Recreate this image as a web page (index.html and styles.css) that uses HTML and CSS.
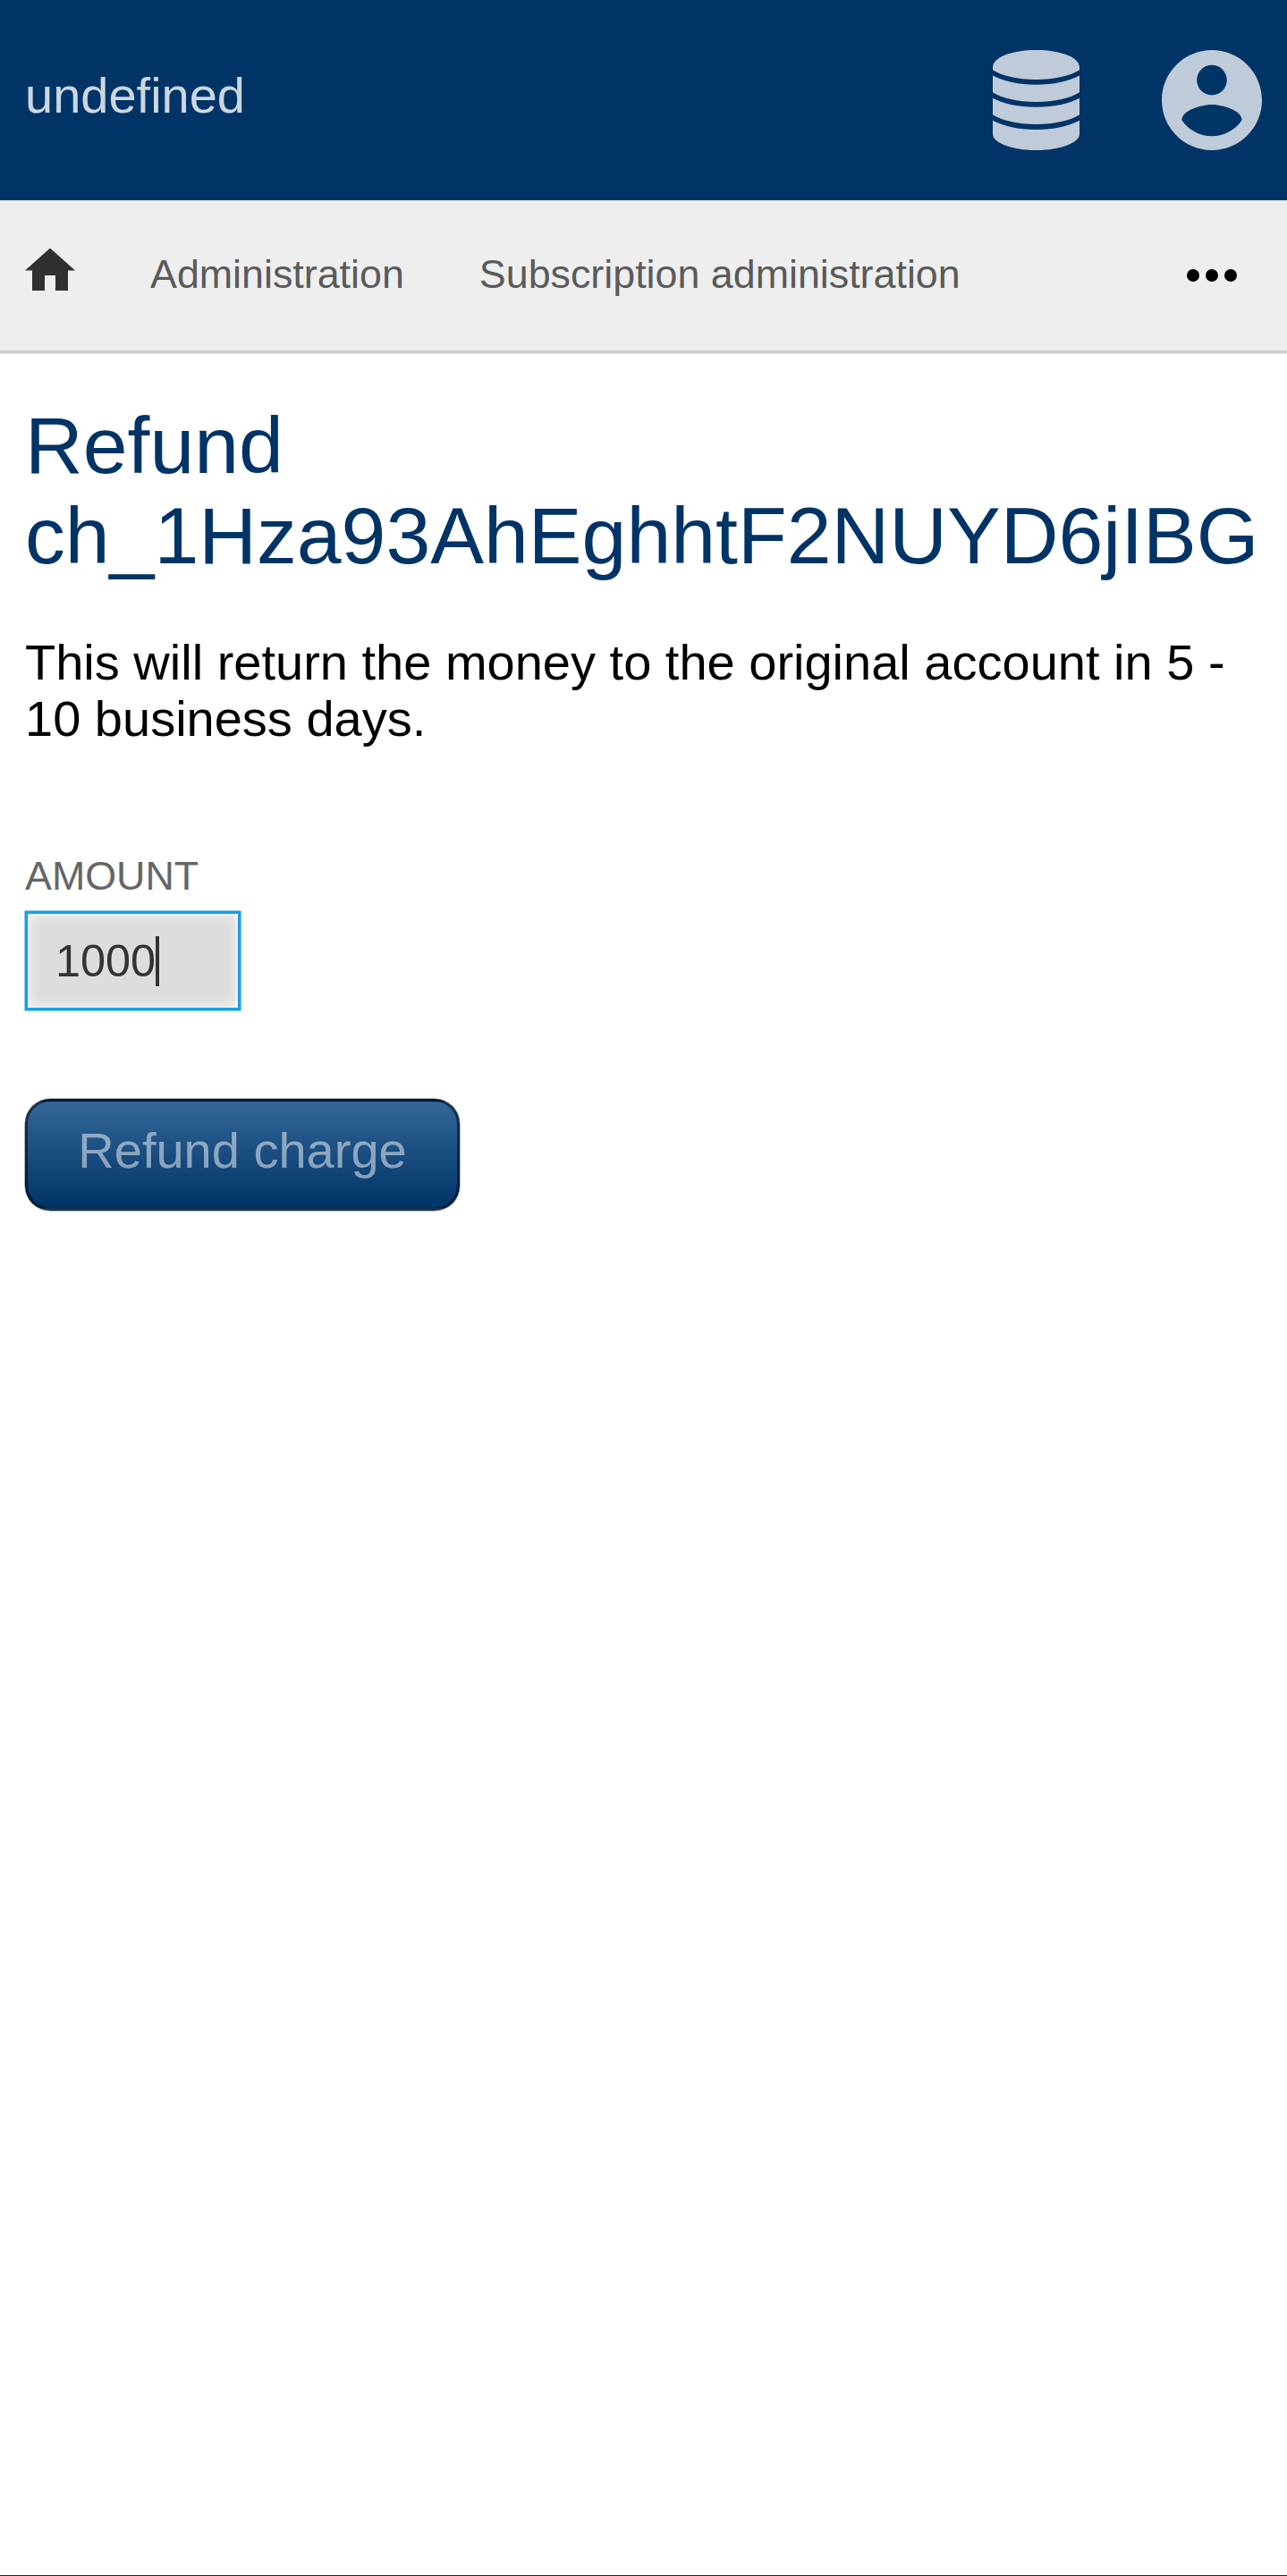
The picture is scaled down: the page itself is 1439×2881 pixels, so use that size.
FILE: index.html
```html
<!DOCTYPE html>
<html lang="en">
<head>
<meta charset="utf-8">
<title>Refund charge</title>
<link rel="stylesheet" href="styles.css">
</head>
<body>
<header class="header">
  <span class="brand">undefined</span>
  <div class="header-icons">
    <svg class="icon-database" viewBox="0 0 97 112" aria-hidden="true">
      <path d="M0 19.500C0 8 21 0 48.500 0S97 8 97 19.500V22.200C87 28.700 69 33 48.500 33S10 28.700 0 22.200z"/>
      <path d="M0 28.500C12 35 29 38.700 48.500 38.700S85 35 97 28.500V47.300C87 53.800 69 58 48.500 58S10 53.800 0 47.300z"/>
      <path d="M0 53.700C12 60.200 29 63.700 48.500 63.700S85 60.200 97 53.700V72.300C87 78.800 69 83 48.500 83S10 78.800 0 72.300z"/>
      <path d="M0 78.700C12 85.200 29 89 48.500 89S85 85.200 97 78.700V94C97 103.500 76 112 48.500 112S0 103.500 0 94z"/>
    </svg>
    <svg class="icon-account" viewBox="2 2 20 20" aria-hidden="true">
      <path d="M12 2C6.480 2 2 6.480 2 12s4.480 10 10 10 10-4.480 10-10S17.520 2 12 2zm0 3c1.660 0 3 1.340 3 3s-1.340 3-3 3-3-1.340-3-3 1.340-3 3-3zm0 14.200c-2.500 0-4.710-1.280-6-3.220.030-1.990 4-3.080 6-3.080 1.990 0 5.970 1.090 6 3.080-1.290 1.940-3.500 3.220-6 3.220z"/>
    </svg>
  </div>
</header>
<nav class="nav">
  <svg class="icon-home" viewBox="0 0 56 56" aria-hidden="true">
    <path d="M28 4.500 56 29.500H48V52H34V35H22V52H8V29.500H0z"/>
  </svg>
  <a class="nav-link">Administration</a>
  <a class="nav-link">Subscription administration</a>
  <svg class="icon-more" viewBox="0 0 56 14" aria-hidden="true">
    <circle cx="7" cy="7" r="7"/><circle cx="28" cy="7" r="7"/><circle cx="49" cy="7" r="7"/>
  </svg>
</nav>
<main class="content">
  <h1 class="title">Refund ch_1Hza93AhEghhtF2NUYD6jIBG</h1>
  <p class="description">This will return the money to the original account in 5 - 10 business days.</p>
  <form class="form">
    <label class="label">AMOUNT</label>
    <div class="field"><span>1000</span><span class="caret"></span></div>
    <button class="button" type="button">Refund charge</button>
  </form>
</main>
</body>
</html>
```
FILE: styles.css
```css
* {
  box-sizing: border-box;
}

body {
  display: flex;
  flex-direction: column;
  height: 2881px;
  margin: 0;
  padding-bottom: 1px;
  background: #003366;
  font-family: "Liberation Sans", Arial, sans-serif;
  font-size: 56px;
}

.header {
  display: flex;
  flex: none;
  align-items: center;
  justify-content: space-between;
  height: 224px;
  padding: 0 28.5px 0 28px;
  background: #003366;
}

.brand {
  padding-bottom: 10px;
  color: rgba(255, 255, 255, 0.8);
  line-height: 64px;
}

.header-icons {
  display: flex;
  gap: 92px;
  fill: rgba(255, 255, 255, 0.75);
}

.icon-database {
  width: 97px;
  height: 112px;
}

.icon-account {
  width: 112px;
  height: 112px;
}

.nav {
  display: flex;
  flex: none;
  align-items: center;
  gap: 84px;
  height: 171px;
  padding: 0 56.5px 0 28px;
  border-bottom: 3px solid #cccccc;
  background: #eeeeee;
}

.icon-home {
  width: 56px;
  height: 56px;
  margin-bottom: 15px;
  fill: #303030;
}

.nav-link {
  margin-bottom: 4px;
  color: #5a5a5a;
  font-size: 44.8px;
  line-height: 50px;
}

.icon-more {
  width: 56px;
  height: 14px;
  margin-left: auto;
}

.content {
  flex: 1;
  padding: 53px 28px 0;
  background: #ffffff;
  box-shadow: inset 0 1px 0 #e6e6e6;
}

.title {
  margin: 0 0 59px;
  color: #003366;
  font-size: 89.6px;
  font-weight: 400;
  line-height: 101px;
}

.description {
  margin: 0 0 118px;
  line-height: 63px;
}

.form {
  display: flex;
  flex-direction: column;
  align-items: flex-start;
}

.label {
  margin-bottom: 14px;
  color: #666666;
  font-size: 44.8px;
  line-height: 52px;
}

.field {
  display: flex;
  align-items: center;
  width: 241px;
  height: 111px;
  margin-bottom: 99px;
  padding-left: 31px;
  border: 3px solid #139fec;
  background: #dddddd;
  box-shadow: inset 0 0 14px #ffffff, 0 0 0 0.5px #139fec;
  color: #333333;
  font-size: 50.4px;
}

.caret {
  width: 3.5px;
  height: 56px;
  background: #333333;
}

.button {
  width: 486px;
  height: 125px;
  padding: 0 0 10px;
  border: 3px solid rgba(0, 0, 0, 0.5);
  border-radius: 28px;
  background: linear-gradient(#336699, #003366);
  box-shadow: 0 0 0 0.5px rgba(0, 26, 51, 0.6);
  color: rgba(255, 255, 255, 0.5);
  font: inherit;
}
```
